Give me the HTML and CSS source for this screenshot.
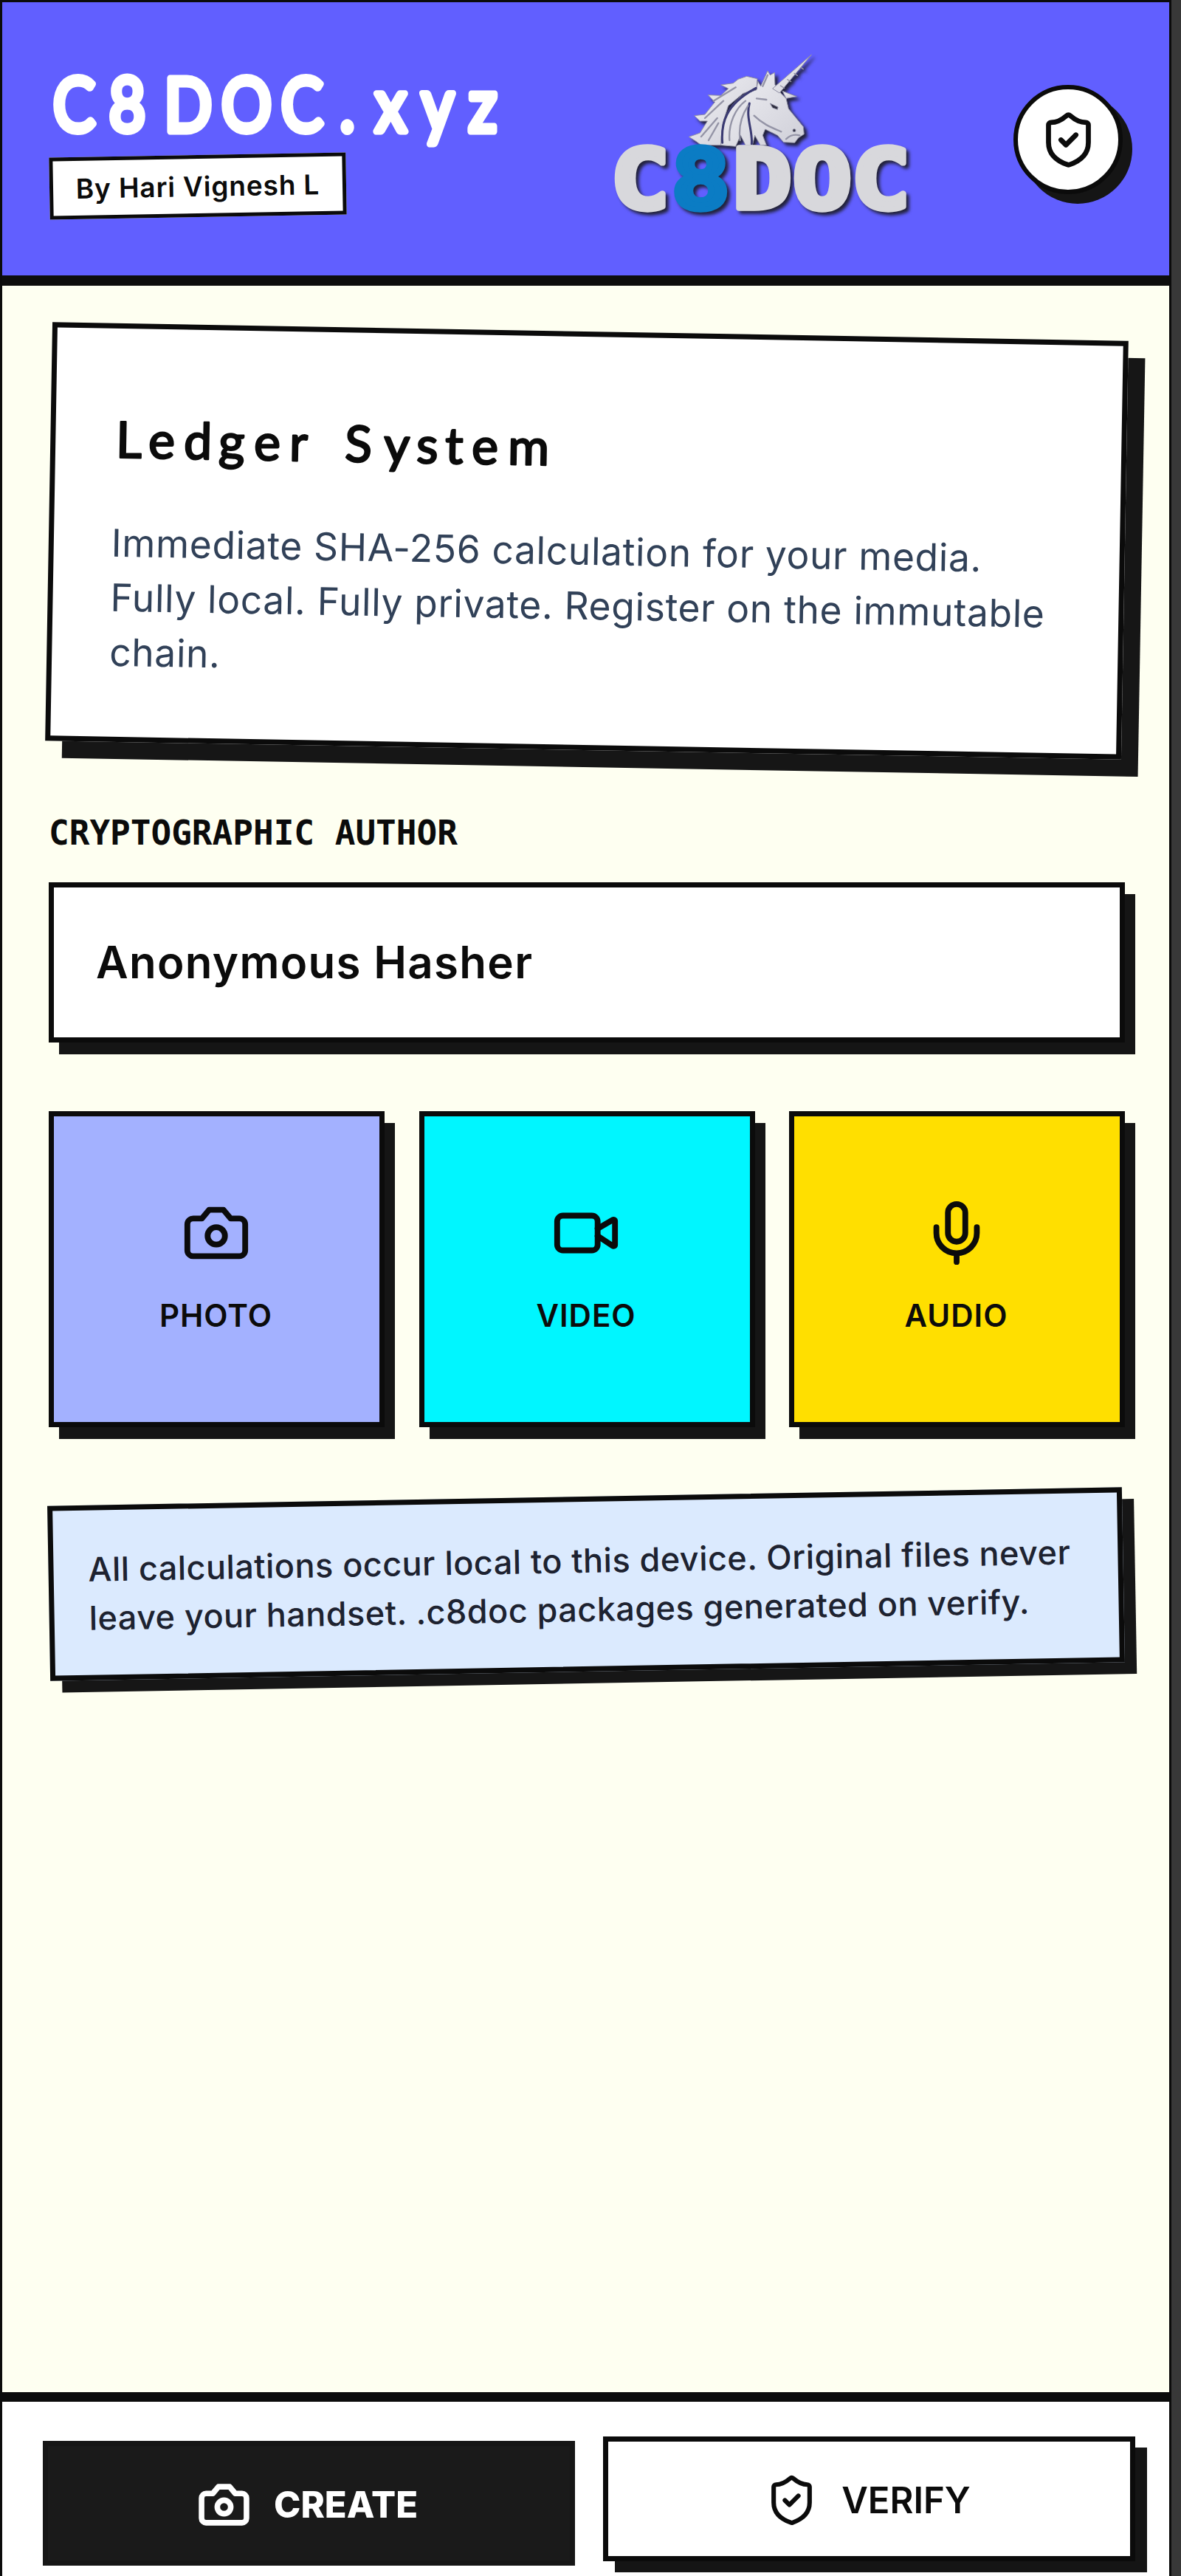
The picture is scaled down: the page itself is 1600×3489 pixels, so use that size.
FILE: index.html
```html
<!DOCTYPE html>
<html lang="en">

<head>
    <meta charset="UTF-8">
    <meta name="viewport" content="width=device-width, initial-scale=1.0">
    <title>C8DOC.xyz</title>
    <link rel="stylesheet" href="styles.css">
</head>

<body>

<!-- shared icon shapes -->
<svg class="sprite" width="0" height="0">
    <symbol id="shield" viewBox="0 0 24 24">
        <path d="M20 13c0 5-3.5 7.5-7.66 8.95a1 1 0 0 1-.67-.01C7.5 20.5 4 18 4 13V6a1 1 0 0 1 1-1c2 0 4.5-1.2 6.24-2.72a1.17 1.17 0 0 1 1.52 0C14.51 3.81 17 5 19 5a1 1 0 0 1 1 1z"/>
        <path d="m9 12 2 2 4-4"/>
    </symbol>
    <symbol id="camera" viewBox="0 0 24 24">
        <path d="M14.5 4h-5L7 7H4a2 2 0 0 0-2 2v9a2 2 0 0 0 2 2h16a2 2 0 0 0 2-2V9a2 2 0 0 0-2-2h-3l-2.500-3z"/>
        <circle cx="12" cy="13" r="3"/>
    </symbol>
</svg>

<div class="app">

    <header>
        <div class="brand">
            <svg class="title" width="640" height="128" viewBox="0 0 640 128">
                <text transform="scale(.85 1)" y="98" x="6 95 183 274 369 463 519 593 668">C8DOC.xyz</text>
            </svg>
            <span class="badge">By Hari Vignesh L</span>
        </div>

        <svg class="logo" width="420" height="240" viewBox="0 0 1260 720">
            <defs>
                <linearGradient id="stone" x1="0" y1="0" x2="1" y2="1">
                    <stop offset="0" stop-color="#f0f0f4"/>
                    <stop offset="1" stop-color="#cfcfd8"/>
                </linearGradient>
            </defs>
            <!-- unicorn -->
            <g class="unicorn">
                <path d="M618 140L575 130L540 142L520 158L470 165L500 180L470 208L418 206L445 235L405 285L362 290L385 312H415L385 360L340 376L370 395L390 410H470L478 320L500 250L560 200L615 180Z"/>
                <path d="M470 410C470 320 500 240 570 200L615 185L620 150L632 170L660 108L670 125L688 115L690 165L715 200L735 220L745 262L805 335L808 365L785 380L770 400L725 398L700 370L650 345L640 370L655 410L630 410L608 370L598 410L570 410L550 370L530 415Z"/>
                <path d="M680 180L838 42L708 198Z"/>
                <path d="M720 190L778 212L735 220Z"/>
                <path class="line dark" d="M476 400C470 320 488 245 612 178M586 240C570 300 600 350 595 405"/>
                <path class="line" d="M505 390C500 320 530 260 570 230M548 390C540 330 560 280 580 250M440 230L530 175M405 300L480 230M390 375L455 300M640 170L660 125M420 390L460 320M605 290C640 325 680 340 715 355"/>
                <path class="line horn" d="M712 168L728 178M740 143L755 152M768 118L781 127M795 94L805 101"/>
                <path class="eye" d="M670 240L702 255L700 265L680 258Z"/>
                <circle class="eye" cx="768" cy="350" r="6"/>
                <path class="line" d="M735 385C750 370 770 365 790 370M615 220L655 225"/>
            </g>
            <!-- word mark -->
            <g class="wordmark">
                <text x="22" y="665" textLength="240" lengthAdjust="spacingAndGlyphs">C</text>
                <text x="518" y="665" textLength="240" lengthAdjust="spacingAndGlyphs">D</text>
                <text x="762" y="665" textLength="240" lengthAdjust="spacingAndGlyphs">O</text>
                <text x="1000" y="665" textLength="240" lengthAdjust="spacingAndGlyphs">C</text>
                <text class="blue" x="268" y="665" textLength="240" lengthAdjust="spacingAndGlyphs">8</text>
            </g>
        </svg>

        <button class="round">
            <svg class="icon" width="81" height="81"><use href="#shield"/></svg>
        </button>
    </header>

    <main>
        <section class="card">
            <svg class="heading" width="620" height="90" viewBox="0 0 620 90">
                <text y="73" x="4 48 96 143 191 239 280 314 367 411 450 486 535">Ledger System</text>
            </svg>
            <p>Immediate SHA-256 calculation for your media.<br>
            Fully local. Fully private. Register on the immutable<br>
            chain.</p>
        </section>

        <label for="author">CRYPTOGRAPHIC AUTHOR</label>
        <input id="author" type="text" value="Anonymous Hasher">

        <div class="tiles">
            <button class="tile photo">
                <svg class="icon" width="94" height="94"><use href="#camera"/></svg>
                PHOTO
            </button>
            <button class="tile video">
                <svg class="icon" width="94" height="94" viewBox="0 0 24 24">
                    <path d="m16 13 5.223 3.482a.5.5 0 0 0 .777-.416V7.870a.5.5 0 0 0-.752-.432L16 10.5"/>
                    <rect x="2" y="6" width="14" height="12" rx="2"/>
                </svg>
                VIDEO
            </button>
            <button class="tile audio">
                <svg class="icon" width="94" height="94" viewBox="0 0 24 24">
                    <rect x="9" y="2" width="6" height="13" rx="3"/>
                    <path d="M19 10v2a7 7 0 0 1-14 0v-2M12 19v3"/>
                </svg>
                AUDIO
            </button>
        </div>

        <p class="notice">All calculations occur local to this device. Original files never<br>
        leave your handset. .c8doc packages generated on verify.</p>
    </main>

    <footer>
        <button class="tab active">
            <svg class="icon" width="73" height="73"><use href="#camera"/></svg>
            CREATE
        </button>
        <button class="tab">
            <svg class="icon" width="73" height="73"><use href="#shield"/></svg>
            VERIFY
        </button>
    </footer>

</div>

</body>
</html>
```

FILE: styles.css
```css
* {
    box-sizing: border-box;
}

body {
    margin: 0;
    background-color: #383838;
    font-family: Inter, "Liberation Sans", sans-serif;
    color: #0b0b0b;
}

.sprite {
    display: none;
}

.app {
    display: flex;
    flex-direction: column;
    width: 1587px;
    height: 3489px;
    border: 3px solid #0b0b0b;
    border-bottom: 0;
    background-color: #fefff1;
    overflow: hidden;
}

button {
    font-family: inherit;
    color: inherit;
    padding: 0;
    display: flex;
    align-items: center;
    justify-content: center;
}

.icon {
    fill: none;
    stroke: currentColor;
    stroke-width: 2;
    stroke-linecap: round;
    stroke-linejoin: round;
    flex: none;
}

/* header */

header {
    display: flex;
    align-items: flex-start;
    height: 384px;
    padding-left: 64px;
    background-color: #615fff;
    border-bottom: 14px solid #0d0d0d;
    flex: none;
}

.brand {
    width: 753px;
    padding-top: 77px;
}

.title {
    display: block;
    overflow: visible;
}

.title text {
    font-family: Lato, sans-serif;
    font-size: 100px;
    fill: #fff;
    stroke: #fff;
    stroke-width: 9px;
    stroke-linejoin: round;
}

.badge {
    display: flex;
    align-items: center;
    justify-content: center;
    width: 402px;
    height: 84px;
    margin-top: 2px;
    background-color: #fff;
    border: 5px solid #0b0b0b;
    font-size: 37px;
    font-weight: 600;
    letter-spacing: 0.85px;
    transform: rotate(-1deg);
}

.logo {
    margin-top: 57px;
    overflow: visible;
    filter: drop-shadow(4px 4px 2px #22223a);
}

.unicorn {
    fill: url(#stone);
    stroke: #8f8fa4;
    stroke-width: 3;
    stroke-linejoin: round;
}

.unicorn .line {
    fill: none;
    stroke: #9494a6;
    stroke-width: 7;
    stroke-linecap: round;
}

.unicorn .dark {
    stroke: #3a3a72;
    stroke-width: 9;
}

.unicorn .horn {
    stroke-width: 4;
}

.unicorn .eye {
    fill: #2c2c3c;
}

.wordmark {
    font-family: "DejaVu Sans Mono", monospace;
    font-weight: bold;
    font-size: 335px;
    fill: #d8d8dc;
    stroke: #d8d8dc;
    stroke-width: 22;
    stroke-linejoin: round;
}

.wordmark .blue {
    fill: #0b7cc4;
    stroke: #0b7cc4;
}

.round {
    width: 148px;
    height: 148px;
    margin: 112px 0 0 133px;
    border-radius: 50%;
    border: 6px solid #0b0b0b;
    background-color: #fff;
    box-shadow: 13px 13px 0 #151515;
}

/* content */

main {
    flex: 1;
    padding: 62px 61px 0 63px;
}

.card {
    width: 1458px;
    height: 567px;
    padding: 102px 0 0 78px;
    background-color: #fff;
    border: 7px solid #0b0b0b;
    box-shadow: 23px 23px 0 #161616;
    transform: rotate(1deg);
}

.heading {
    display: block;
    overflow: visible;
}

.heading text {
    font-family: Lato, sans-serif;
    font-size: 68px;
    fill: #0b0b0b;
    stroke: #0b0b0b;
    stroke-width: 2.5px;
    stroke-linejoin: round;
}

.card p {
    margin: 61px 0 0;
    font-size: 51.5px;
    line-height: 74px;
    letter-spacing: 0.65px;
    color: #314158;
    white-space: nowrap;
}

label {
    display: block;
    margin-top: 85px;
    font-family: "DejaVu Sans Mono", monospace;
    font-size: 46px;
    font-weight: bold;
    line-height: 54px;
}

input {
    display: block;
    width: 1458px;
    height: 217px;
    margin-top: 40px;
    padding: 0 57px 2px;
    background-color: #fff;
    border: 7px solid #0b0b0b;
    border-radius: 0;
    box-shadow: 14px 16px 0 #151515;
    font-family: inherit;
    font-size: 60px;
    font-weight: 600;
    letter-spacing: 1.3px;
    color: #0b0b0b;
}

.tiles {
    display: grid;
    grid-template-columns: repeat(3, 455px);
    justify-content: space-between;
    width: 1458px;
    margin-top: 93px;
}

.tile {
    flex-direction: column;
    gap: 40px;
    height: 428px;
    padding: 0 2px 8px 0;
    border: 7px solid #0b0b0b;
    box-shadow: 14px 16px 0 #151515;
    font-size: 42px;
    font-weight: 600;
    line-height: 50px;
    letter-spacing: 1px;
}

.photo {
    background-color: #a3b1ff;
}

.video {
    background-color: #00f6ff;
}

.audio {
    background-color: #ffdf00;
}

.notice {
    width: 1456px;
    height: 237px;
    margin: 94px 0 0;
    padding: 47px 0 0 47px;
    background-color: #dbeafe;
    border: 7px solid #0b0b0b;
    box-shadow: 16px 16px 0 #161616;
    font-size: 45px;
    font-weight: 500;
    line-height: 66px;
    letter-spacing: 0.45px;
    color: #1d2230;
    white-space: nowrap;
    transform: rotate(-1deg);
}

/* bottom tabs */

footer {
    display: flex;
    flex: none;
    height: 249px;
    padding-left: 55px;
    border-top: 13px solid #0b0b0b;
    background-color: #fff;
}

.tab {
    gap: 31px;
    width: 721px;
    height: 169px;
    margin: 47px 0 0 38px;
    padding: 4px 4px 0 0;
    border: 7px solid #0b0b0b;
    background-color: #fff;
    box-shadow: 16px 15px 0 #151515;
    font-size: 49px;
    font-weight: 600;
}

.tab.active {
    margin: 53px 0 0;
    background-color: #1a1a1a;
    border-color: #161616;
    box-shadow: none;
    color: #fff;
    font-weight: 800;
}

.tab.active .icon {
    stroke-width: 2.5;
}
```
